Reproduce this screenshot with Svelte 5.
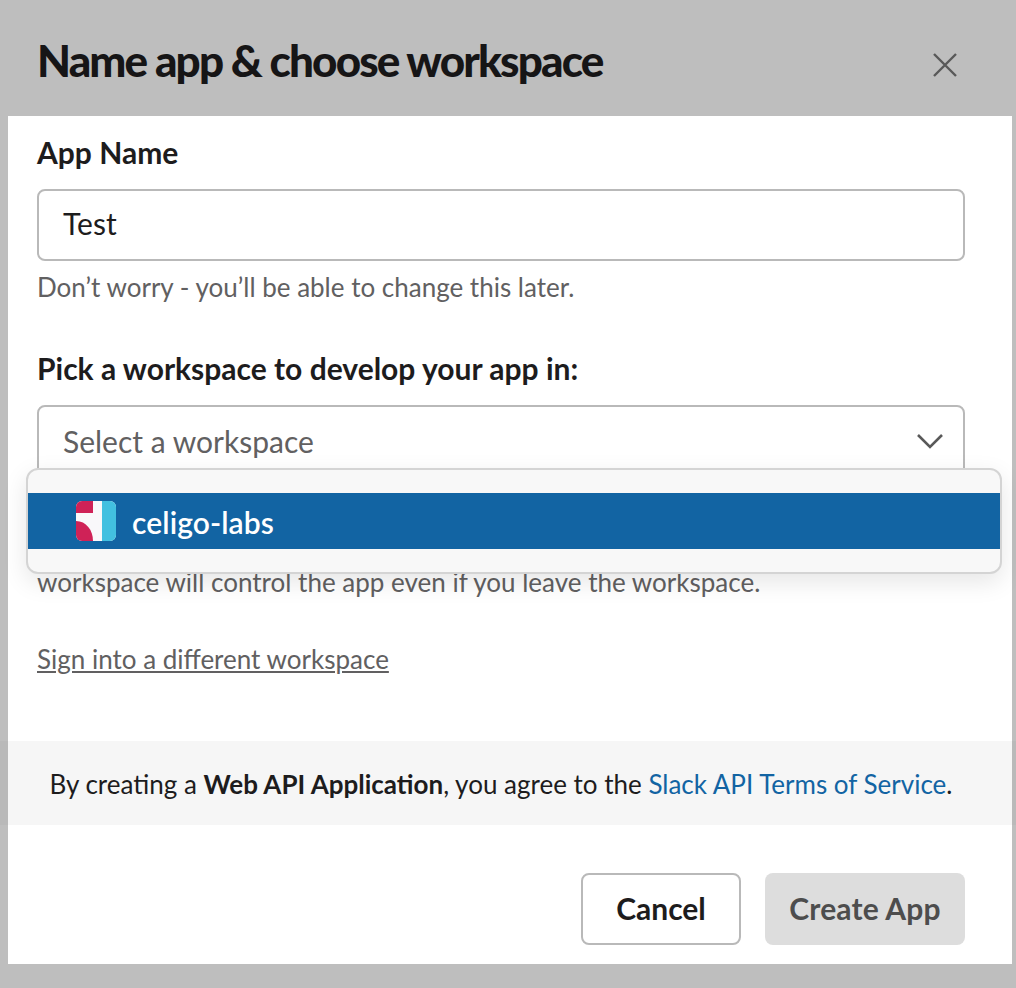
<script>
  const title = 'Name app & choose workspace';
</script>

<div class="page">
  <header class="head">
    <h1>{title}</h1>
    <svg class="close" viewBox="0 0 24 24" width="24" height="24" aria-label="Close">
      <path d="M1 1 L23 23 M23 1 L1 23" fill="none" stroke="#595959" stroke-width="2.4" />
    </svg>
  </header>

  <main class="panel">
    <section class="form">
      <label class="label" for="name">App Name</label>
      <div class="input" id="name"><span class="lift">Test</span></div>
      <p class="hint">Don’t worry - you’ll be able to change this later.</p>

      <div class="label second">Pick a workspace to develop your app in:</div>
      <div class="selectwrap">
        <div class="select">
          <span>Select a workspace</span>
          <svg width="28" height="16" viewBox="0 0 28 16">
            <path d="M2 2 L14 14 L26 2" fill="none" stroke="#595959" stroke-width="2.6" />
          </svg>
        </div>
        <div class="menu">
          <div class="option">
            <svg class="logo" width="40" height="40" viewBox="0 0 40 40">
              <defs><clipPath id="lc"><rect width="40" height="40" rx="6" /></clipPath></defs>
              <g clip-path="url(#lc)">
                <rect width="40" height="40" fill="#f9f8fa" />
                <rect x="26" width="14" height="40" fill="#42c0e0" />
                <rect width="17" height="12" fill="#cf2257" />
                <path d="M0 20 C10 20 17 29 17 40 L0 40 Z" fill="#cf2257" />
              </g>
            </svg>
            <span class="drop">celigo-labs</span>
          </div>
        </div>
      </div>
      <p class="hint note">workspace will control the app even if you leave the workspace.</p>
      <a class="signin" href="#signin">Sign into a different workspace</a>
    </section>

    <div class="terms">
      By creating a <b>Web API Application</b>, you agree to the <a href="#terms">Slack API Terms of Service</a>.
    </div>

    <footer class="actions">
      <button class="cancel">Cancel</button>
      <button class="create">Create App</button>
    </footer>
  </main>
</div>

<style>
  :global(body) {
    margin: 0;
    background: #bebebe;
  }
  .page {
    width: 1016px;
    height: 988px;
    background: #bebebe;
    font-family: Lato, "Liberation Sans", sans-serif;
    color: #1d1c1d;
    overflow: hidden;
  }
  .head {
    height: 116px;
    box-sizing: border-box;
    padding: 0 59px 0 37px;
    display: flex;
    align-items: center;
    justify-content: space-between;
  }
  h1 {
    margin: 0;
    font-size: 44px;
    font-weight: 900;
    letter-spacing: -1.85px;
    color: #161516;
    line-height: 50px;
    position: relative;
    top: 2px;
  }
  .close {
    position: relative;
    top: 7px;
  }
  .panel {
    margin-left: 8px;
    width: 1004px;
    height: 848px;
    background: #fff;
    display: flex;
    flex-direction: column;
  }
  .form {
    flex: 0 0 625px;
    padding: 18px 47px 0 29px;
    box-sizing: border-box;
  }
  .label {
    display: block;
    font-size: 30px;
    font-weight: 700;
    line-height: 36px;
  }
  .second {
    margin-top: 45px;
  }
  .input,
  .select {
    box-sizing: border-box;
    width: 928px;
    height: 72px;
    border: 2px solid #b9b9b9;
    border-radius: 8px;
    padding: 0 24px;
    display: flex;
    align-items: center;
    font-size: 30px;
    background: #fff;
  }
  .input {
    margin-top: 19px;
  }
  .lift {
    position: relative;
    top: -2px;
  }
  .hint {
    margin: 0;
    font-size: 26px;
    line-height: 36px;
    color: #616061;
  }
  .input + .hint {
    margin-top: 8px;
  }
  .selectwrap {
    position: relative;
    margin-top: 19px;
  }
  .select {
    justify-content: space-between;
    color: #616061;
    padding-right: 19px;
  }
  .menu {
    position: absolute;
    top: 63px;
    left: -11px;
    width: 976px;
    height: 106px;
    box-sizing: border-box;
    background: #f8f8f8;
    border: 2px solid #d4d4d4;
    border-radius: 12px;
    box-shadow: 0 8px 24px rgba(0, 0, 0, 0.1);
    display: flex;
    align-items: center;
  }
  .option {
    width: 100%;
    height: 56px;
    background: #1264a3;
    color: #fff;
    display: flex;
    align-items: center;
    gap: 16px;
    padding-left: 48px;
    box-sizing: border-box;
    font-size: 30px;
    font-weight: 600;
    letter-spacing: 0.1px;
  }
  .drop {
    position: relative;
    top: 1px;
  }
  .note {
    margin-top: 87px;
  }
  .signin {
    display: inline-block;
    margin-top: 41px;
    font-size: 26px;
    line-height: 36px;
    color: #616061;
    text-decoration: underline;
  }
  .terms {
    height: 84px;
    background: #f6f6f6;
    box-shadow: -8px 0 0 #b9b9b9, 4px 0 0 #b9b9b9;
    display: flex;
    align-items: center;
    justify-content: center;
    white-space: pre-wrap;
    font-size: 26px;
    padding: 1px 18px 0 0;
    box-sizing: border-box;
  }
  .terms b {
    font-weight: 700;
  }
  .terms a {
    color: #1264a3;
    text-decoration: none;
  }
  .actions {
    flex: 1;
    display: flex;
    justify-content: flex-end;
    gap: 24px;
    padding: 48px 47px 0 0;
  }
  button {
    height: 72px;
    border-radius: 8px;
    font-family: inherit;
    font-size: 30px;
    font-weight: 700;
    box-sizing: border-box;
    padding: 0 0 2px;
  }
  .cancel {
    width: 160px;
    background: #fff;
    border: 2px solid #b9b9b9;
    color: #1d1c1d;
  }
  .create {
    width: 200px;
    background: #dddddd;
    border: none;
    color: #4d4d4d;
    letter-spacing: 0.15px;
  }
</style>
